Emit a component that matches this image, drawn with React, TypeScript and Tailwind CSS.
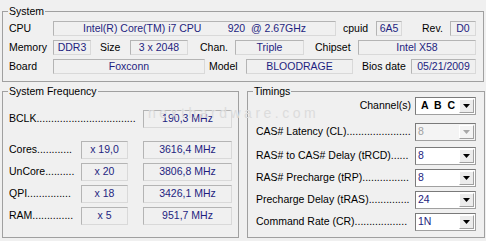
import React from 'react';

const VALUE = 'text-[#1e1e80]';

const Field = ({ w, children, className = '' }: { w: string; children?: React.ReactNode; className?: string }) => (
  <div
    className={`${w} flex h-full items-center justify-center whitespace-pre border border-[#b4b4b4] border-b-[#d9d9d9] border-r-[#d9d9d9] ${VALUE} ${className}`}
  >
    {children}
  </div>
);

const Label = ({ w, children, className = '' }: { w: string; children: React.ReactNode; className?: string }) => (
  <div className={`${w} shrink-0 whitespace-nowrap ${className}`}>{children}</div>
);

// label followed by leader dots up to the box
const Dotted = ({ w, text, dots }: { w: string; text: string; dots: number }) => (
  <div className={`${w} shrink-0 overflow-hidden whitespace-nowrap`}>
    {text}
    {'.'.repeat(dots)}
  </div>
);

const Arrow = ({ disabled }: { disabled?: boolean }) => (
  <div
    className={`mr-px flex h-[14px] w-[15px] items-center justify-center border border-l-white border-t-white border-r-[#a0a0a0] border-b-[#a0a0a0] ${
      disabled ? 'bg-[#f4f4f4]' : 'bg-[#ececec]'
    }`}
  >
    <svg width="7" height="4" viewBox="0 0 7 4">
      <polygon points="0,0 7,0 3.5,4" fill={disabled ? '#a8a8a8' : '#000'} />
    </svg>
  </div>
);

const Combo = ({ value, disabled }: { value: string; disabled?: boolean }) => (
  <div
    className={`flex h-[18px] w-[61px] items-center border border-[#a0a0a0] border-l-[#7a7a7a] border-t-[#7a7a7a] ${
      disabled ? 'bg-[#f4f4f4] text-[#a0a0a0]' : `bg-white ${VALUE}`
    }`}
  >
    <span className="flex-1 pl-[2px]">{value}</span>
    <Arrow disabled={disabled} />
  </div>
);

const Group = ({ title, className = '', children }: { title: string; className?: string; children: React.ReactNode }) => (
  <fieldset className={`border border-[#a0a0a0] ${className}`}>
    <legend className="ml-[5px] px-px leading-[12px]">{title}</legend>
    {children}
  </fieldset>
);

const timings = [
  { label: 'RAS# to CAS# Delay (tRCD)', value: '8', mt: 'mt-[6px]', dots: 6 },
  { label: 'RAS# Precharge (tRP)', value: '8', mt: 'mt-[4px]', dots: 16 },
  { label: 'Precharge Delay (tRAS)', value: '24', mt: 'mt-[4px]', dots: 14 },
  { label: 'Command Rate (CR)', value: '1N', mt: 'mt-[4px]', dots: 18 },
];

const freqs = [
  { label: 'UnCore', mult: 'x 20', mhz: '3806,8 MHz', dots: 10 },
  { label: 'QPI', mult: 'x 18', mhz: '3426,1 MHz', dots: 15 },
  { label: 'RAM', mult: 'x 5', mhz: '951,7 MHz', dots: 14 },
];

export default function App() {
  return (
    <div className="relative h-[241px] w-[486px] overflow-hidden bg-[#f0f0f0] pt-[5px] font-['Liberation_Sans',Arial,sans-serif] text-[10.5px] text-black">
      {/* System */}
      <Group title="System" className="mx-[2px]">
        <div className="flex flex-col gap-[4px] pb-[7px] pl-[6px] pt-[4px]">
          <div className="flex h-[15px] items-center">
            <Label w="w-[44px]">CPU</Label>
            <Field w="w-[283px]">{'Intel(R) Core(TM) i7 CPU         920  @ 2.67GHz'}</Field>
            <Label w="w-[33px]" className="ml-[7px]">cpuid</Label>
            <Field w="w-[26px]">6A5</Field>
            <Label w="w-[28px]" className="ml-[20px]">Rev.</Label>
            <Field w="w-[26px]">D0</Field>
          </div>
          <div className="flex h-[15px] items-center">
            <Label w="w-[44px]">Memory</Label>
            <Field w="w-[38px]">DDR3</Field>
            <Label w="w-[30px]" className="ml-[9px]">Size</Label>
            <Field w="w-[58px]">3 x 2048</Field>
            <Label w="w-[35px]" className="ml-[12px]">Chan.</Label>
            <Field w="w-[69px]">Triple</Field>
            <Label w="w-[43px]" className="ml-[11px]">Chipset</Label>
            <Field w="w-[118px]">Intel X58</Field>
          </div>
          <div className="flex h-[15px] items-center">
            <Label w="w-[44px]">Board</Label>
            <Field w="w-[152px]">Foxconn</Field>
            <Label w="w-[37px]" className="ml-[4px]">Model</Label>
            <Field w="w-[107px]">BLOODRAGE</Field>
            <Label w="w-[49px]" className="ml-[9px]">Bios date</Label>
            <Field w="w-[65px]">05/21/2009</Field>
          </div>
        </div>
      </Group>

      <div className="mt-[3px] flex">
        {/* System Frequency */}
        <Group title="System Frequency" className="ml-[2px] w-[237px]">
          <div className="flex flex-col pb-[11px] pl-[6px] pt-[13px]">
            <div className="flex h-[18px] items-center">
              <Dotted w="w-[130px]" text="BCLK" dots={34} />
              <Field w="w-[89px]" className="ml-[4px]">190,3 MHz</Field>
            </div>
            <div className="mt-[13px] flex h-[18px] items-center">
              <Dotted w="w-[68px]" text="Cores" dots={12} />
              <Field w="w-[47px]" className="ml-[4px]">x 19,0</Field>
              <Field w="w-[89px]" className="ml-[15px]">3616,4 MHz</Field>
            </div>
            {freqs.map((f) => (
              <div key={f.label} className="mt-[4px] flex h-[18px] items-center">
                <Dotted w="w-[68px]" text={f.label} dots={f.dots} />
                <Field w="w-[47px]" className="ml-[4px]">{f.mult}</Field>
                <Field w="w-[89px]" className="ml-[15px]">{f.mhz}</Field>
              </div>
            ))}
          </div>
        </Group>

        {/* Timings */}
        <Group title="Timings" className="ml-[8px] w-[238px]">
          <div className="flex flex-col pb-[6px] pl-[8px] pt-0">
            <div className="flex h-[18px] items-center">
              <div className="w-[155px] text-right">Channel(s)</div>
              <div className="ml-[4px] flex h-[18px] w-[61px] items-center border border-[#a0a0a0] border-l-[#7a7a7a] border-t-[#7a7a7a] bg-white">
                <span className="flex-1 whitespace-pre pl-[5px] font-bold">{'A  B  C'}</span>
                <Arrow />
              </div>
            </div>
            <div className="mt-[8px] flex h-[18px] items-center">
              <Dotted w="w-[155px]" text="CAS# Latency (CL)" dots={22} />
              <div className="ml-[4px]">
                <Combo value="8" disabled />
              </div>
            </div>
            {timings.map((t) => (
              <div key={t.label} className={`${t.mt} flex h-[18px] items-center`}>
                <Dotted w="w-[155px]" text={t.label} dots={t.dots} />
                <div className="ml-[4px]">
                  <Combo value={t.value} />
                </div>
              </div>
            ))}
          </div>
        </Group>
      </div>

      {/* watermark */}
      <div className="pointer-events-none absolute left-[148px] top-[104px] text-[14px] leading-[18px] tracking-[3.5px] text-[#dcdcdc]">
        nexthardware.com
      </div>
    </div>
  );
}
